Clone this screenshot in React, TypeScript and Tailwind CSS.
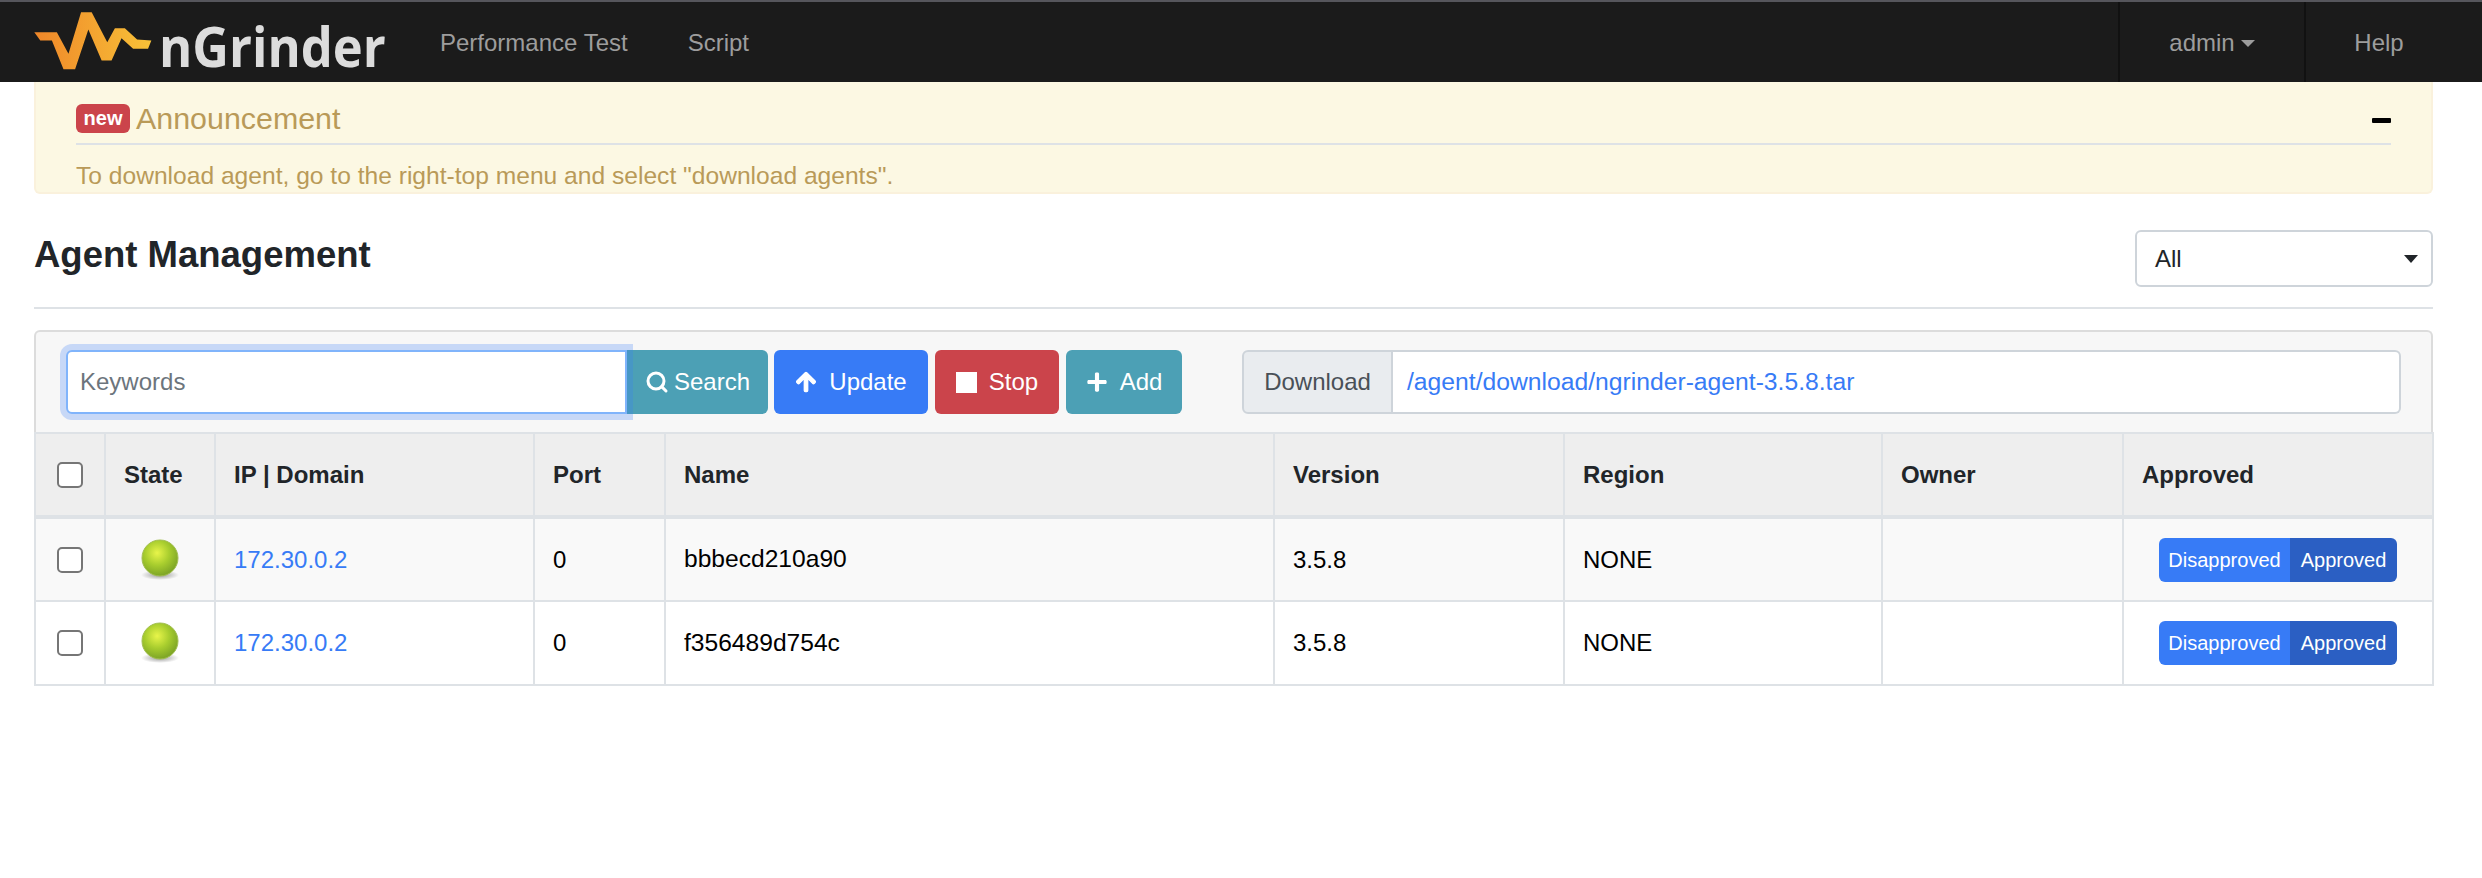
import React from 'react';
import { FaArrowUp, FaPlus } from 'react-icons/fa';
import { Search } from 'lucide-react';

const columns = [
  { title: 'State', width: 'w-[110px]' },
  { title: 'IP | Domain', width: 'w-[319px]' },
  { title: 'Port', width: 'w-[131px]' },
  { title: 'Name', width: 'w-[609px]' },
  { title: 'Version', width: 'w-[290px]' },
  { title: 'Region', width: 'w-[318px]' },
  { title: 'Owner', width: 'w-[241px]' },
  { title: 'Approved', width: 'w-[310px]' },
];

const agents = [
  { ip: '172.30.0.2', port: '0', name: 'bbbecd210a90', version: '3.5.8', region: 'NONE', stripe: true },
  { ip: '172.30.0.2', port: '0', name: 'f356489d754c', version: '3.5.8', region: 'NONE', stripe: false },
];

const Logo = () => (
  <div className="flex items-center w-[405px] pl-[34px] h-full">
    <svg width="120" height="63" viewBox="42 30 360 190" className="shrink-0 -mt-[4px]">
      <defs>
        <linearGradient id="wave" x1="42" y1="0" x2="395" y2="0" gradientUnits="userSpaceOnUse">
          <stop offset="0" stopColor="#ef8629" />
          <stop offset="1" stopColor="#f8c238" />
        </linearGradient>
      </defs>
      <polygon
        points="42,100 110,100 145,165 183,40 215,40 262,130 285,88 315,88 352,122 395,125 385,150 340,150 305,118 275,185 245,185 205,92 165,212 130,212 95,125 60,125"
        fill="url(#wave)"
      />
    </svg>
    <span className="ml-[5px] mt-[6px] text-[56px] font-bold leading-none text-[#dcdcdc] font-['Open_Sans',sans-serif] origin-left scale-x-[0.905]">nGrinder</span>
  </div>
);

const Ball = () => (
  <svg width="38" height="42" viewBox="0 0 38 42" className="block mx-auto">
    <defs>
      <radialGradient id="ball" cx="0.42" cy="0.36" r="0.68">
        <stop offset="0" stopColor="#e8f54a" />
        <stop offset="0.5" stopColor="#a8cd2e" />
        <stop offset="1" stopColor="#779f25" />
      </radialGradient>
      <radialGradient id="ball-shadow">
        <stop offset="0" stopColor="#00000066" />
        <stop offset="1" stopColor="#00000000" />
      </radialGradient>
    </defs>
    <ellipse cx="19" cy="36" rx="19" ry="5" fill="url(#ball-shadow)" />
    <circle cx="19" cy="19" r="18" fill="url(#ball)" stroke="#a3bf52" strokeWidth="1" />
  </svg>
);

const Checkbox = () => (
  <input type="checkbox" className="block mx-auto appearance-none w-[26px] h-[26px] bg-white border-2 border-[#767676] rounded-[5px]" />
);

const ToolButton = ({ bg, icon, label, width, gap }: { bg: string; icon: React.ReactNode; label: string; width: string; gap: string }) => (
  <button className={`flex items-center justify-center h-[64px] rounded-[6px] text-white text-[24px] ${gap} ${bg} ${width}`}>
    {icon}
    {label}
  </button>
);

export default function App() {
  return (
    <div className="min-h-[878px] bg-white font-['Liberation_Sans',Arial,sans-serif] text-[24px] text-[#212529]">
      <header className="flex items-stretch h-[82px] bg-[#1b1b1b] border-t-2 border-[#56565c] text-[#9d9d9d]">
        <Logo />
        <nav className="flex items-center gap-[60px] pl-[35px] pt-[2px]">
          <a>Performance Test</a>
          <a>Script</a>
        </nav>
        <div className="ml-auto flex h-full">
          <div className="flex items-center justify-center gap-[6px] w-[186px] pt-[2px] border-l-2 border-[#111111] -ml-[1px]">
            admin
            <span className="w-0 h-0 border-x-[7px] border-x-transparent border-t-[7px] border-t-[#9d9d9d]" />
          </div>
          <div className="flex items-center justify-center w-[178px] pr-[30px] pt-[2px] border-l-2 border-[#111111]">Help</div>
        </div>
      </header>

      <main className="pl-[34px] pr-[49px]">
        <section className="h-[112px] px-[40px] pt-[18px] bg-[#fcf8e3] border-2 border-t-0 border-[#faf1dc] rounded-b-[6px] text-[#b99a58]">
          <div className="flex items-center h-[45px] pb-[7px] border-b-2 border-[#dee2e6]">
            <span className="flex items-center justify-center w-[54px] h-[29px] rounded-[6px] bg-[#cb444b] text-white text-[20px] font-bold">new</span>
            <span className="ml-[6px] text-[30.4px] leading-none">Announcement</span>
            <span className="ml-auto mt-[4px] w-[19px] h-[5px] rounded-[1px] bg-black" />
          </div>
          <p className="mt-[12px] h-[34px] text-[24.6px] leading-[38px]">To download agent, go to the right-top menu and select "download agents".</p>
        </section>

        <div className="flex items-start justify-between h-[115px] pt-[36px] border-b-2 border-[#dee2e6]">
          <h2 className="text-[36.5px] leading-[50px] font-bold">Agent Management</h2>
          <div className="flex items-center justify-between w-[298px] h-[57px] pl-[18px] pr-[13px] border-2 border-[#ced4da] rounded-[6px]">
            All
            <span className="w-0 h-0 border-x-[7px] border-x-transparent border-t-[8px] border-t-[#212529]" />
          </div>
        </div>

        <div className="flex items-center h-[102px] mt-[21px] pl-[30px] pr-[30px] bg-[#f7f7f7] border-2 border-b-0 border-[#dcdcdc] rounded-t-[6px]">
          <input
            placeholder="Keywords"
            className="relative z-10 w-[561px] h-[64px] px-[12px] bg-white border-2 border-[#80b4fb] rounded-l-[6px] shadow-[0_0_0_6px_rgba(55,123,246,0.25)] outline-none placeholder:text-[#6c757d]"
          />
          <ToolButton bg="bg-[#4ca0b5] rounded-l-none" gap="gap-[5px]" width="w-[141px]" icon={<Search size={24} strokeWidth={3} />} label="Search" />
          <div className="flex gap-[7px] ml-[6px]">
            <ToolButton bg="bg-[#377bf6]" gap="gap-[12px]" width="w-[154px]" icon={<FaArrowUp size={22} stroke="currentColor" strokeWidth={30} />} label="Update" />
            <ToolButton bg="bg-[#cb444b]" gap="gap-[12px]" width="w-[124px]" icon={<span className="w-[21px] h-[21px] bg-white" />} label="Stop" />
            <ToolButton bg="bg-[#4ca0b5]" gap="gap-[12px]" width="w-[116px]" icon={<FaPlus size={22} />} label="Add" />
          </div>
          <div className="flex flex-1 ml-[60px] h-[64px]">
            <span className="flex items-center justify-center w-[151px] bg-[#e9ecef] border-2 border-[#ced4da] rounded-l-[6px] text-[#495057]">Download</span>
            <a className="flex items-center flex-1 pl-[14px] bg-white border-2 border-l-0 border-[#ced4da] rounded-r-[6px] text-[24.7px] text-[#377bf6]">/agent/download/ngrinder-agent-3.5.8.tar</a>
          </div>
        </div>

        <table className="w-[2399px] table-fixed border-collapse">
          <thead>
            <tr className="h-[84px] bg-[#eeeeee]">
              <th className="w-[70px] border-2 border-b-4 border-[#dee2e6]"><Checkbox /></th>
              {columns.map((col) => (
                <th key={col.title} className={`${col.width} px-[18px] border-2 border-b-4 border-[#dee2e6] text-left font-bold`}>{col.title}</th>
              ))}
            </tr>
          </thead>
          <tbody>
            {agents.map((agent) => (
              <tr key={agent.name} className={`h-[84px] text-black ${agent.stripe ? 'bg-[#f9f9f9]' : 'bg-white'}`}>
                <td className="border-2 border-[#dee2e6]"><Checkbox /></td>
                <td className="border-2 border-[#dee2e6]"><Ball /></td>
                <td className="px-[18px] border-2 border-[#dee2e6] text-[#377bf6]">{agent.ip}</td>
                <td className="px-[18px] border-2 border-[#dee2e6]">{agent.port}</td>
                <td className="px-[18px] border-2 border-[#dee2e6] text-[24.6px]">{agent.name}</td>
                <td className="px-[18px] border-2 border-[#dee2e6]">{agent.version}</td>
                <td className="px-[18px] border-2 border-[#dee2e6]">{agent.region}</td>
                <td className="px-[18px] border-2 border-[#dee2e6]"></td>
                <td className="border-2 border-[#dee2e6]">
                  <div className="flex w-[238px] h-[44px] mx-auto text-[20px] text-white">
                    <span className="flex items-center justify-center w-[131px] bg-[#377bf6] rounded-l-[6px]">Disapproved</span>
                    <span className="flex items-center justify-center flex-1 bg-[#2b5fc3] rounded-r-[6px]">Approved</span>
                  </div>
                </td>
              </tr>
            ))}
          </tbody>
        </table>
      </main>
    </div>
  );
}
